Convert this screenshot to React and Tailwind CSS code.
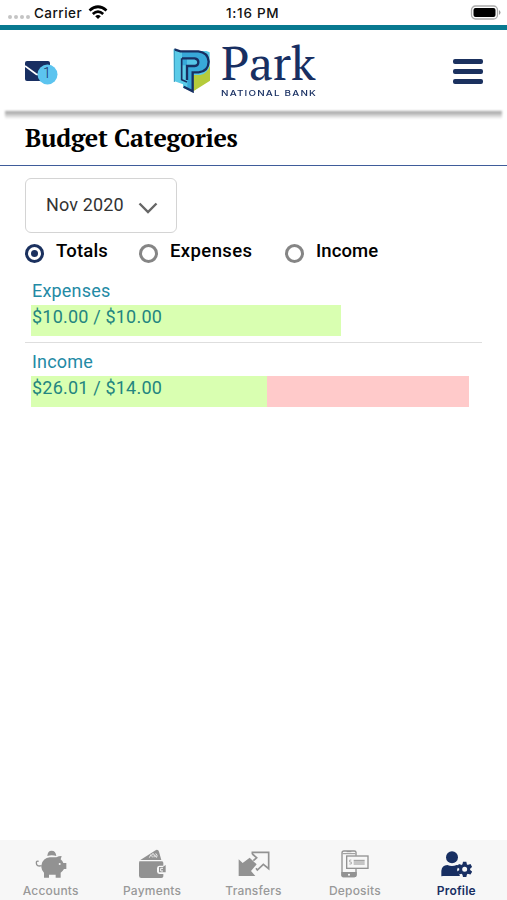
import React from 'react';
import clsx from 'clsx';

const CATEGORIES = [
    { name: 'Expenses', amounts: '$10.00 / $10.00', green: 310, red: 0 },
    { name: 'Income', amounts: '$26.01 / $14.00', green: 236, red: 202 },
];

const VIEWS = [
    { name: 'Totals', width: 'w-[114px]', tracking: 'tracking-[0.2px]' },
    { name: 'Expenses', width: 'w-[146px]', tracking: 'tracking-[0.4px]' },
    { name: 'Income', width: 'w-[110px]', tracking: 'tracking-[0.1px]' },
];

function StatusBar() {
    return (
        <div className="relative flex h-[25px] shrink-0 items-center px-2 font-[Inter,sans-serif] text-[13.5px] font-medium text-[#111]">
            <div className="flex gap-[2px] pt-2">
                {[0, 1, 2, 3].map(i => <span key={i} className="size-[4px] rounded-full bg-[#c4c4c4]" />)}
            </div>
            <span className="ml-[4px] w-[49px] pt-px tracking-[0.45px]">Carrier</span>
            <svg className="ml-[5px]" width="20" height="15" viewBox="0 0 20 15" fill="none" stroke="#000" strokeWidth="2.7">
                <path d="M1.500 5.500 Q10 -2 18.500 5.500" />
                <path d="M4.800 9 Q10 4.300 15.200 9" />
                <path d="M7.200 11.200 Q10 9 12.800 11.200 L10 14Z" fill="#000" stroke="none" />
            </svg>
            <span className="absolute left-[226px] top-[3px] tracking-[0.7px]">1:16 PM</span>
            <svg className="ml-auto -mr-[2px]" width="31" height="15" viewBox="0 0 31 15">
                <rect x="1.500" y="1" width="26" height="13" rx="4" fill="#fff" stroke="#aaa" strokeWidth="1.3" />
                <rect x="3.500" y="3" width="22" height="9" rx="2" fill="#000" />
                <path d="M29 5v5q3-2.500 0-5Z" fill="#999" />
            </svg>
        </div>
    );
}

function Logo() {
    return (
        <div className="flex">
            <svg className="mt-[17px]" width="38" height="46" viewBox="40 38 114 138">
                <path d="M42 44 L62 50 H140 L150 54 V100 L99 173 L70 160 V150 L43 140Z" fill="#5acbe8" />
                <path d="M67 50 H118 Q144 54 147 80 Q146 108 118 112 H98 V168 L83 160 V93 H67Z" fill="#38a9d9" />
                <path d="M82 72 H106 Q116 74 116 83 Q116 92 106 94 H82Z" fill="#55c5e7" />
                <path d="M151 94 V139 L101 171 V122 H122 Q143 117 151 94Z" fill="#b5cb3b" />
                <path d="M44 45 L62 51 H116 Q145 54 147 82 Q146 111 117 114 H99 V171 L72 157" fill="none" stroke="#182f62" strokeWidth="7" />
                <path d="M67 72 H105 Q116 74 116 83 Q116 94 105 95 H82 V137" fill="none" stroke="#182f62" strokeWidth="7" />
                <path d="M66 72 V136 L82 143" fill="none" stroke="#182f62" strokeWidth="5" />
                <path d="M44 46 V143" fill="none" stroke="#3798bd" strokeWidth="3" />
            </svg>
            <div className="ml-[10px] text-[#182f62]">
                <div className="h-[56px] w-[98px] whitespace-nowrap pt-[10px] font-['PT_Serif','Noto_Serif','Liberation_Serif',serif] text-[47.500px] leading-[46px] tracking-[-0.2px]">Park</div>
                <div className="whitespace-nowrap font-['Inter',sans-serif] text-[8px] font-medium leading-[14px]">
                    <span className="inline-block origin-left scale-x-[1.23] tracking-[0.97px]">NATIONAL BANK</span>
                </div>
            </div>
        </div>
    );
}

function Header() {
    return (
        <header className="relative flex h-[86px] shrink-0 justify-between border-t-[5px] border-[#087990] bg-white pl-[25px] pr-[24px]">
            <div className="relative mt-[31px] h-[26px] w-[33px]">
                <svg width="33" height="26" viewBox="0 0 33 26">
                    <rect width="25" height="20" rx="2" fill="#182f62" />
                    <path d="M0 5 L11 13 Q12.500 14 14 13 L25 5" fill="none" stroke="#fff" strokeWidth="1.6" />
                    <circle cx="22.500" cy="13.500" r="10" fill="#5cc4ef" />
                </svg>
                <span className="absolute left-[18px] top-[3px] text-[14px] font-light leading-[18px] text-[#182f62]">1</span>
            </div>
            <div className="absolute left-[173px] top-0"><Logo /></div>
            <div className="mt-[29px] flex h-[25px] w-[30px] flex-col justify-between">
                {[0, 1, 2].map(i => <span key={i} className="h-[5px] rounded-[2px] bg-[#1b315f]" />)}
            </div>
            <div className="absolute bottom-[-8px] left-[5px] right-[5px] h-[8px] bg-linear-to-b from-[#9c9c9c] to-white blur-[1px]" />
        </header>
    );
}

function Category({ category, last }) {
    return (
        <div className={clsx('h-[71px] pl-[6px] pt-[8px] text-[18px] leading-[22px] text-[#238aa5]', !last && 'border-b border-[#dedede]')}>
            <div className="h-[25px] pl-px tracking-[0.2px]">{category.name}</div>
            <div className="flex h-[31px]">
                <div className="whitespace-nowrap bg-[#d9ffb1] pl-px pt-[1px] tracking-[0.2px] text-[#238580]" style={{ width: category.green }}>{category.amounts}</div>
                <div className="bg-[#ffcaca]" style={{ width: category.red }} />
            </div>
        </div>
    );
}

function PiggyIcon() {
    return (
        <svg width="32" height="29" viewBox="0 0 96 87" fill="#929292">
            <path d="M37 18 Q38 2 50 2 Q62 2 64 18 Q50 13 37 18Z" />
            <path d="M20 43 Q24 25 44 22 H64 Q71 18 80 18 L77 28 Q83 33 85 39 H94 V57 H87 Q83 64 77 68 V83 H62 V74 H42 V83 H27 V68 Q19 59 19 51Z" />
            <path d="M20 47 Q4 51 4 39 Q4 32 11 34" fill="none" stroke="#929292" strokeWidth="4" />
            <circle cx="74" cy="42" r="3" fill="#f7f7f7" />
        </svg>
    );
}

function WalletIcon() {
    return (
        <svg width="29" height="30" viewBox="0 0 87 90" fill="#929292">
            <path d="M7 33 L54 3 Q61 1 63 8 L70 33Z" />
            <path d="M34 26 L39 16 M43 25 q-5-7 2-12 q6 4 3 12 M53 13 q7 5 3 12 q-6-1-5-8" fill="none" stroke="#f7f7f7" strokeWidth="2.6" />
            <path d="M4 37 H72 Q76 37 76 42 V50 H64 Q57 51 57 58 V68 Q58 75 65 75 H76 V82 Q76 87 70 87 H10 Q3 87 3 80 V42Z" />
            <path d="M63 54 H74 L83 48 V70 H63Z" />
            <path d="M75 58 H68 V66 H75" fill="none" stroke="#f7f7f7" strokeWidth="3" />
        </svg>
    );
}

function TransferIcon() {
    return (
        <svg width="32" height="27" viewBox="0 0 96 81" fill="none">
            <path d="M2 25 L14 36 L35 20 L56 40 L39 60 L52 75 H2Z" fill="#929292" />
            <path d="M43 10 V4 H92 V53 L76 40 L58 57 L54 52" stroke="#929292" strokeWidth="5" />
            <path d="M43 9 L56 20 L46 29" stroke="#929292" strokeWidth="5" />
        </svg>
    );
}

function DepositIcon() {
    return (
        <svg width="28" height="28" viewBox="0 0 84 84" fill="none" stroke="#929292" strokeWidth="4">
            <path d="M45 17 V7 Q45 3 40 3 H9 Q3 3 3 9 V75 Q3 80 9 80 H40 Q45 80 45 75 V56" />
            <path d="M3 68 H45 V75 Q45 80 40 80 H9 Q3 80 3 75Z" fill="#929292" />
            <circle cx="24" cy="74" r="3" fill="#fff" stroke="none" />
            <path d="M17 5 H31 M5 11 H43" strokeWidth="3" />
            <rect x="17" y="18" width="64" height="37" fill="#f7f7f7" />
            <path d="M38 31 H71 M38 36 H71 M38 42 H71" strokeWidth="3" />
            <path d="M31 30 H26 V36 H31 V42 H25" strokeWidth="2" />
        </svg>
    );
}

function ProfileIcon() {
    return (
        <svg width="31" height="26" viewBox="0 0 93 78" fill="#182f62">
            <circle cx="33" cy="19" r="18" />
            <path d="M1 75 V59 Q3 43 19 42 Q33 48 47 42 L53 43 L48 57 L57 75 H5 Q1 77 1 75Z" />
            <circle cx="71" cy="55" r="12" fill="none" stroke="#182f62" strokeWidth="9" />
            {[0, 60, 120].map(a => <path key={a} d="M66 32 H76 L78 41 H64Z M64 69 H78 L76 78 H66Z" transform={`rotate(${a} 71 55)`} />)}
        </svg>
    );
}

const TABS = [
    { name: 'Accounts', icon: PiggyIcon },
    { name: 'Payments', icon: WalletIcon },
    { name: 'Transfers', icon: TransferIcon },
    { name: 'Deposits', icon: DepositIcon },
    { name: 'Profile', icon: ProfileIcon, active: true },
];

export default function App() {
    return (
        <div className="flex h-[900px] w-[507px] flex-col overflow-hidden bg-white font-[Roboto,sans-serif]">
            <StatusBar />
            <Header />
            <h1 className="h-[55px] shrink-0 border-b border-b-[#3f5c9a] pl-[25px] pt-[10px] font-['PT_Serif','Noto_Serif','Liberation_Serif',serif] text-[25px] font-bold leading-[34px] tracking-[-0.28px] text-black">Budget Categories</h1>
            <main className="flex-1 px-[25px] pt-[12px]">
                <button className="flex h-[55px] w-[152px] items-center rounded-[6px] border border-[#d4d4d4] pl-[20px] text-[18px] text-[#333]">
                    <span className="-mt-[2px] w-[92px] text-left tracking-[0.15px]">Nov 2020</span>
                    <svg className="mt-[5px]" width="20" height="13" viewBox="0 0 20 13" fill="none" stroke="#666" strokeWidth="2.4"><path d="M1.500 1.500 L10 10 L18.500 1.500" /></svg>
                </button>
                <div className="flex h-[39px] text-[18.5px] font-medium text-black">
                    {VIEWS.map((view, i) => (
                        <label key={view.name} className={clsx('flex h-[38px] items-center', view.width)}>
                            <span className={clsx('mt-[3px] flex size-[19px] shrink-0 items-center justify-center rounded-full border-3', i === 0 ? 'border-[#1b315f]' : 'border-[#858585]')}>
                                {i === 0 && <span className="size-[7px] rounded-full bg-[#1b315f]" />}
                            </span>
                            <span className={clsx('-mt-px ml-[12px]', view.tracking)}>{view.name}</span>
                        </label>
                    ))}
                </div>
                {CATEGORIES.map((category, i) => <Category key={category.name} category={category} last={i === 1} />)}
            </main>
            <nav className="grid h-[60px] shrink-0 grid-cols-5 bg-[#f7f7f7]">
                {TABS.map(({ name, icon: Icon, active }) => (
                    <div key={name} className={clsx('flex flex-col items-center font-[Inter,sans-serif] text-[12px] tracking-[0.2px]', active ? 'font-semibold text-[#182f62]' : 'font-medium text-[#999]')}>
                        <div className="flex h-[43px] items-center pl-px pt-[5px]"><Icon /></div>
                        <span className="leading-[16px]">{name}</span>
                    </div>
                ))}
            </nav>
        </div>
    );
}
